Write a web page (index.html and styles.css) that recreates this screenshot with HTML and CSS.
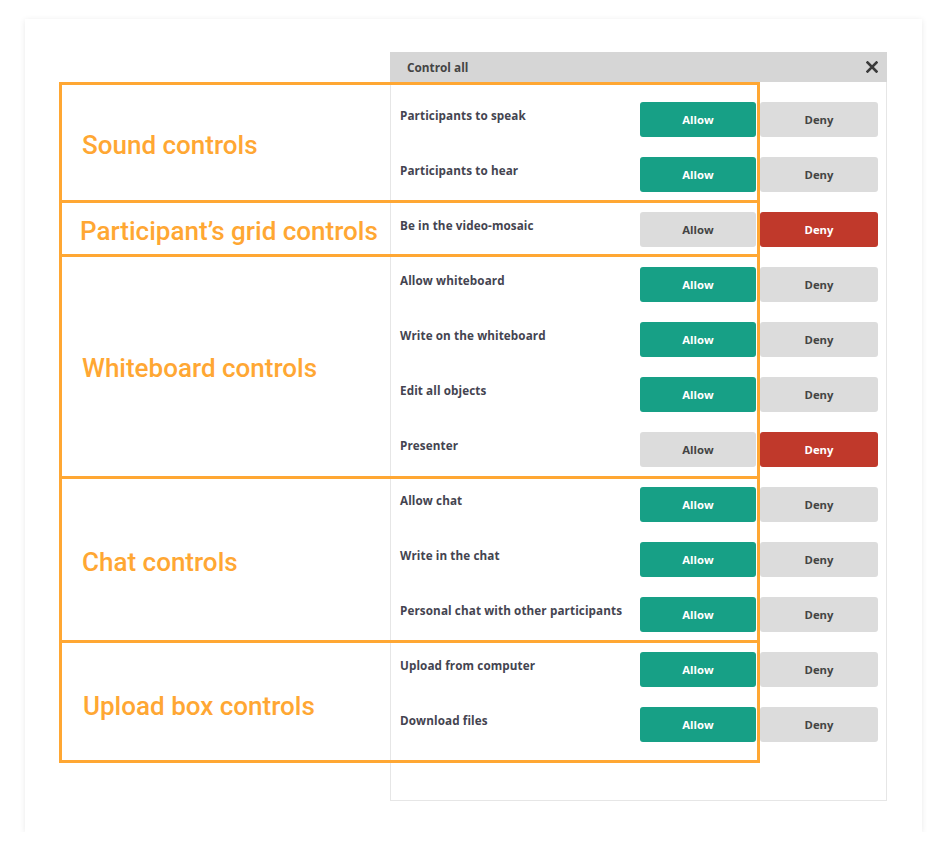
FILE: index.html
```html
<!DOCTYPE html>
<html lang="en">
<head>
<meta charset="utf-8">
<title>Control all</title>
<link rel="stylesheet" href="styles.css">
</head>
<body>
<div class="card">
  <div class="panel">
    <div class="panel-head">
      <span class="panel-title">Control all</span>
      <svg class="close" width="12" height="12" viewBox="0 0 12 12"><path d="M1.5 1.5 L10.5 10.5 M10.5 1.5 L1.5 10.5" stroke="#3a3a3a" stroke-width="2.6" stroke-linecap="square"/></svg>
    </div>
    <div class="panel-body">
      <div class="row"><span class="label">Participants to speak</span><div class="btns"><span class="btn allow on">Allow</span><span class="btn deny">Deny</span></div></div>
      <div class="row"><span class="label">Participants to hear</span><div class="btns"><span class="btn allow on">Allow</span><span class="btn deny">Deny</span></div></div>
      <div class="row"><span class="label">Be in the video-mosaic</span><div class="btns"><span class="btn allow">Allow</span><span class="btn deny on">Deny</span></div></div>
      <div class="row"><span class="label">Allow whiteboard</span><div class="btns"><span class="btn allow on">Allow</span><span class="btn deny">Deny</span></div></div>
      <div class="row"><span class="label">Write on the whiteboard</span><div class="btns"><span class="btn allow on">Allow</span><span class="btn deny">Deny</span></div></div>
      <div class="row"><span class="label">Edit all objects</span><div class="btns"><span class="btn allow on">Allow</span><span class="btn deny">Deny</span></div></div>
      <div class="row"><span class="label">Presenter</span><div class="btns"><span class="btn allow">Allow</span><span class="btn deny on">Deny</span></div></div>
      <div class="row"><span class="label">Allow chat</span><div class="btns"><span class="btn allow on">Allow</span><span class="btn deny">Deny</span></div></div>
      <div class="row"><span class="label">Write in the chat</span><div class="btns"><span class="btn allow on">Allow</span><span class="btn deny">Deny</span></div></div>
      <div class="row"><span class="label">Personal chat with other participants</span><div class="btns"><span class="btn allow on">Allow</span><span class="btn deny">Deny</span></div></div>
      <div class="row"><span class="label">Upload from computer</span><div class="btns"><span class="btn allow on">Allow</span><span class="btn deny">Deny</span></div></div>
      <div class="row"><span class="label">Download files</span><div class="btns"><span class="btn allow on">Allow</span><span class="btn deny">Deny</span></div></div>
    </div>
  </div>
  <div class="notes">
    <div class="note note-sound"><span>Sound controls</span></div>
    <div class="note note-grid"><span>Participant’s grid controls</span></div>
    <div class="note note-wb"><span>Whiteboard controls</span></div>
    <div class="note note-chat"><span>Chat controls</span></div>
    <div class="note note-upload"><span>Upload box controls</span></div>
  </div>
</div>
</body>
</html>
```

FILE: styles.css
```css
html, body {
  margin: 0;
  padding: 0;
  background: #ffffff;
}
body {
  font-family: "Open Sans", "Liberation Sans", sans-serif;
}
.card {
  position: relative;
  box-sizing: border-box;
  margin: 19px 0 0 25px;
  width: 897px;
  height: 813px;
  background: #ffffff;
  box-shadow: 0 1px 6px rgba(0, 0, 0, 0.09);
  padding: 33px 0 0 365px;
}
.panel {
  width: 497px;
  height: 749px;
  box-sizing: border-box;
  display: flex;
  flex-direction: column;
}
.panel-head {
  height: 30px;
  background: #d6d6d6;
  display: flex;
  align-items: center;
  justify-content: space-between;
  padding: 0 9px 0 17px;
  flex: none;
}
.panel-title {
  font-size: 11.8px;
  font-weight: 700;
  color: #444444;
}
.close {
  display: block;
}
.panel-body {
  flex: 1;
  border: 1px solid #e6e6e6;
  border-top: none;
  padding: 20px 8px 0 9px;
  display: flex;
  flex-direction: column;
  gap: 20px;
}
.row {
  display: flex;
  justify-content: space-between;
  align-items: flex-start;
  height: 35px;
}
.label {
  font-size: 11.7px;
  font-weight: 700;
  color: #444450;
  line-height: 16px;
  margin-top: 5px;
  letter-spacing: 0.1px;
}
.btns {
  display: flex;
  gap: 4px;
}
.btn {
  height: 35px;
  border-radius: 3px;
  background: #dcdcdc;
  color: #444444;
  font-size: 11.3px;
  font-weight: 700;
  display: flex;
  align-items: center;
  justify-content: center;
}
.allow { width: 116px; }
.deny { width: 118px; }
.allow.on {
  background: #17a086;
  color: #ffffff;
}
.deny.on {
  background: #c0392b;
  color: #ffffff;
}
.notes {
  position: absolute;
  left: 34px;
  top: 63px;
  width: 701px;
  display: flex;
  flex-direction: column;
  border-bottom: 3px solid #ffa733;
}
.note {
  box-sizing: border-box;
  border: 3px solid #ffa733;
  border-bottom: none;
  display: flex;
  align-items: center;
  padding-left: 20px;
  padding-top: 4px;
  font-family: Roboto, "Liberation Sans", sans-serif;
  font-weight: 500;
  font-size: 26px;
  color: #ffa733;
}
.note-sound { height: 118px; }
.note-grid { height: 54px; padding-left: 18px; }
.note-wb { height: 222px; padding-top: 3px; }
.note-chat { height: 164px; }
.note-upload { height: 120px; padding-left: 21px; padding-top: 8px; }
```
